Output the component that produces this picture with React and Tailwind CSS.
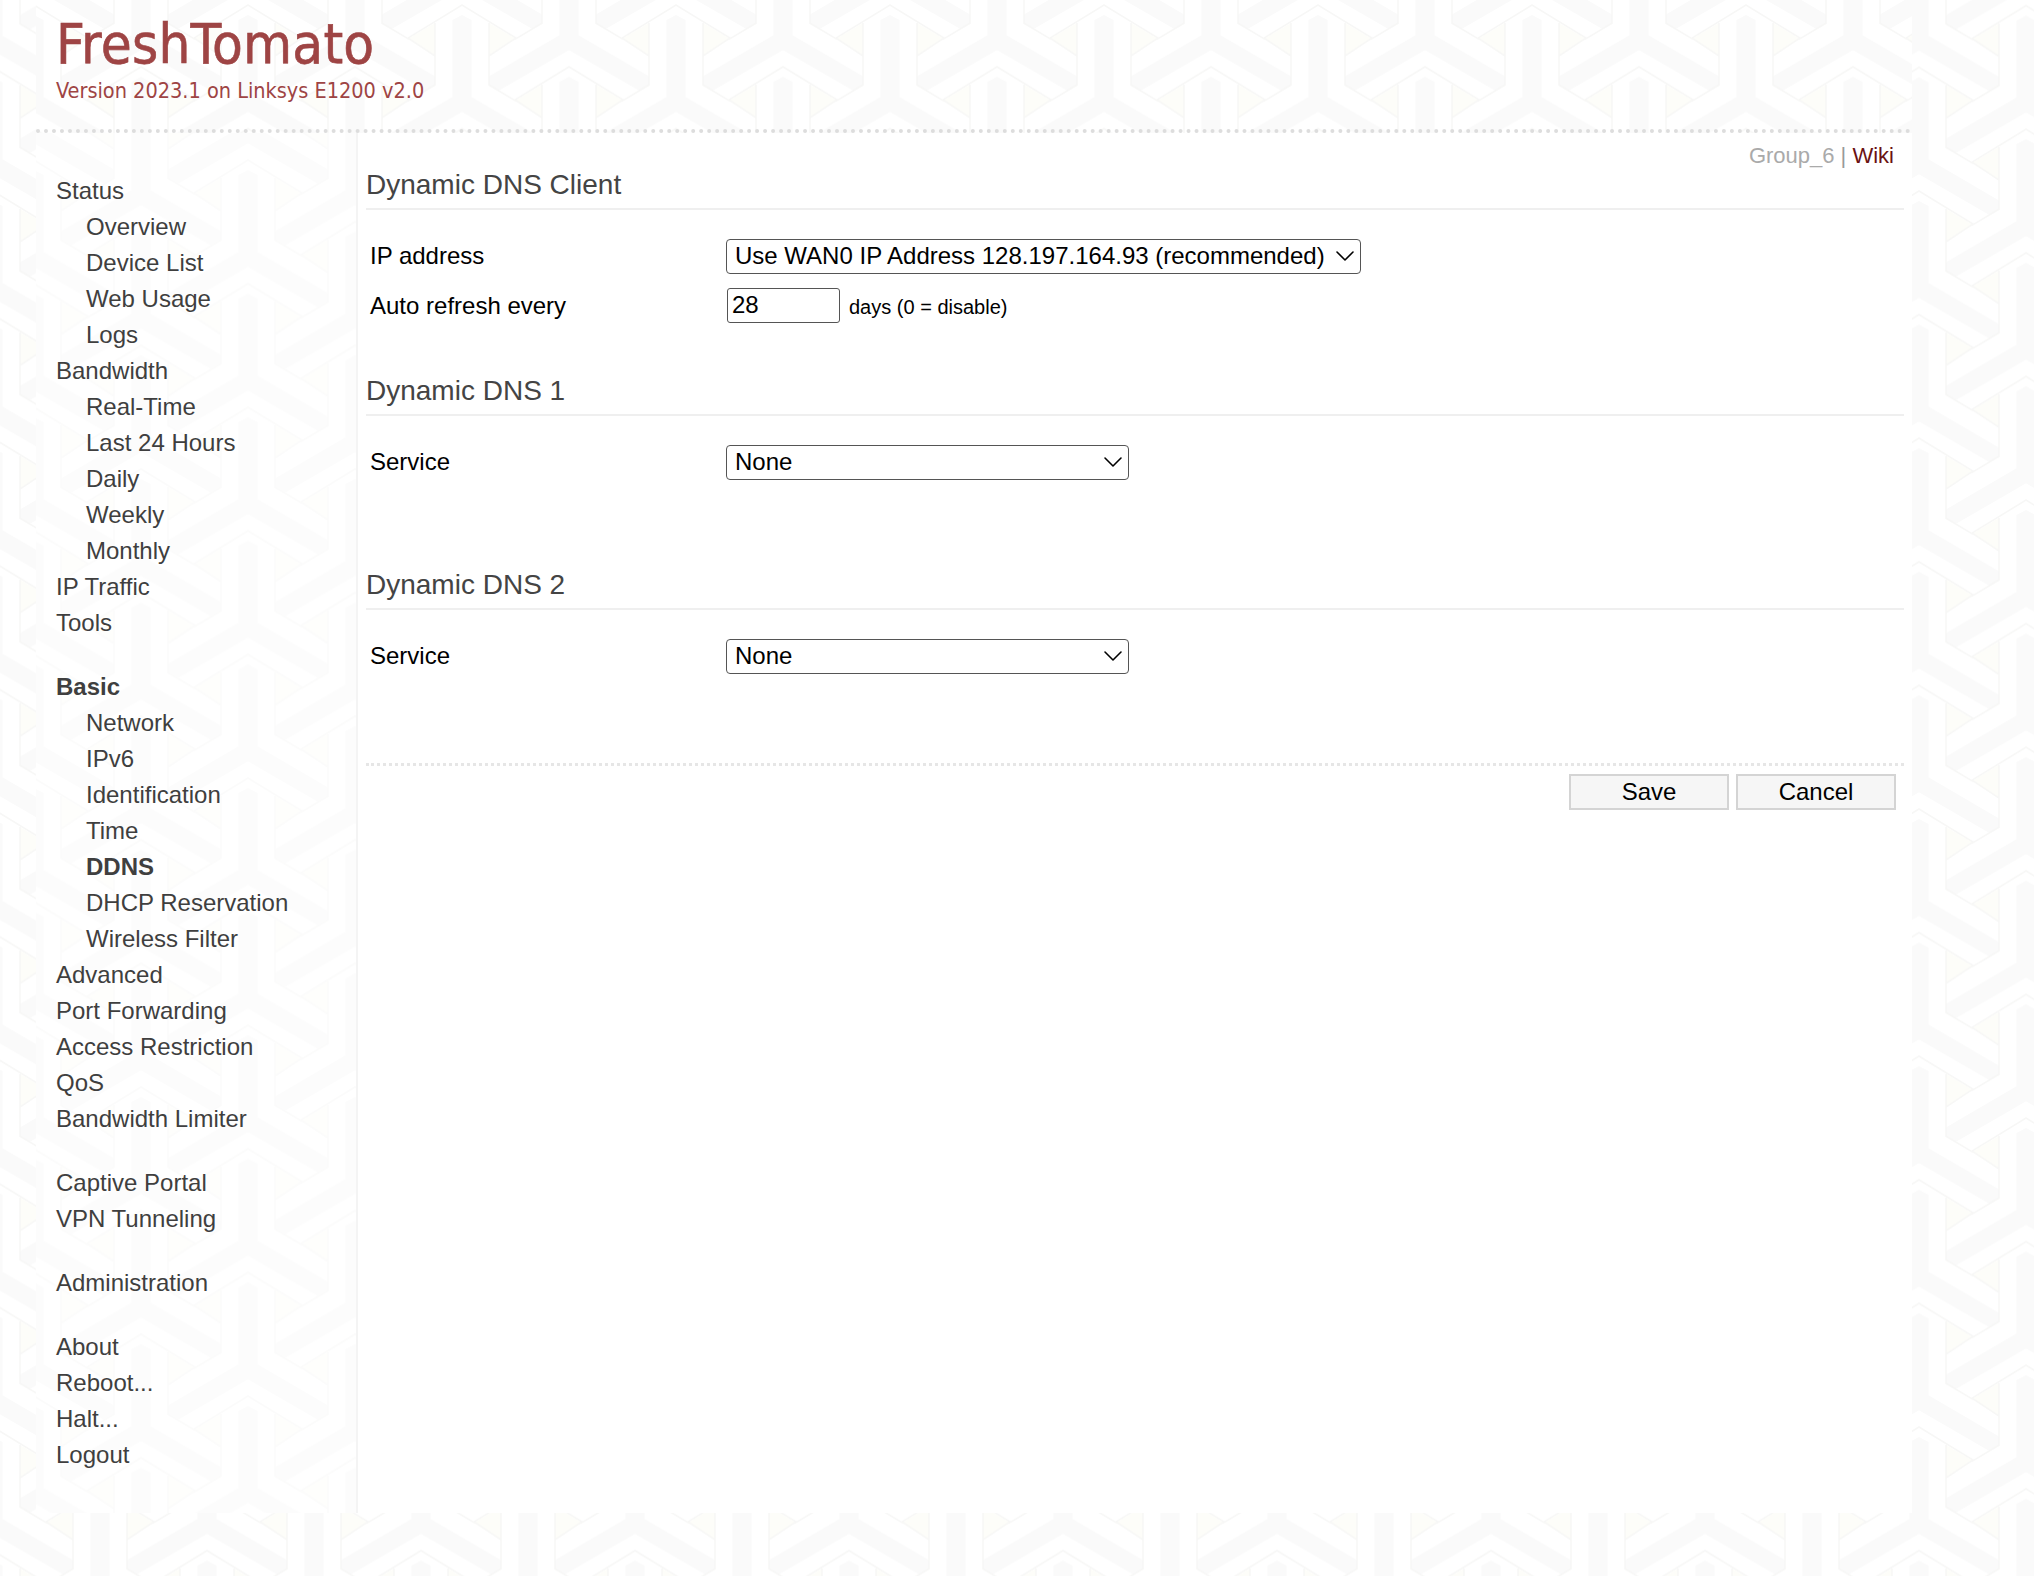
import { ChevronDown } from 'lucide-react'

const tileW = 214
const tileH = 123.6

// lattice copies of the motif that can touch one tile
const copies = []
for (let j = -3; j <= 2; j++) {
  for (let i = -1; i <= 3; i++) {
    if ((i + j) % 2 === 0) copies.push([i * 107, j * 61.8])
  }
}

function Motif({ x, y }) {
  return (
    <g transform={`translate(${x} ${y})`}>
      <polygon
        fill="#fafafa"
        points="0,10 9.5,15 9.5,92 80,133 80,142 70.4,147.6 0,107 -70.4,147.6 -80,142 -80,133 -9.5,92 -9.5,15"
      />
      <polygon fill="#fdfdf9" points="27,18 27,51 54,34" />
      <polygon fill="#fdfdf9" points="-27,18 -27,51 -54,34" />
      <path
        fill="none"
        stroke="#f7f7f6"
        strokeWidth="1.5"
        d="M-54 33 L0 0 L54 33 L27 51 M-54 33 L-27 51 M27 18 V80 L54 96 M-27 18 V80 L-54 96"
      />
    </g>
  )
}

function HexBackground({ id, x, y, className }) {
  return (
    <svg className={`absolute inset-0 h-full w-full ${className || ''}`} aria-hidden="true">
      <defs>
        <pattern id={id} x={x} y={y} width={tileW} height={tileH} patternUnits="userSpaceOnUse">
          {copies.map(([cx, cy]) => (
            <Motif key={`${cx}_${cy}`} x={cx} y={cy} />
          ))}
        </pattern>
      </defs>
      <rect width="100%" height="100%" fill={`url(#${id})`} />
    </svg>
  )
}

const navGroups = [
  [
    { label: 'Status' },
    { label: 'Overview', sub: true },
    { label: 'Device List', sub: true },
    { label: 'Web Usage', sub: true },
    { label: 'Logs', sub: true },
    { label: 'Bandwidth' },
    { label: 'Real-Time', sub: true },
    { label: 'Last 24 Hours', sub: true },
    { label: 'Daily', sub: true },
    { label: 'Weekly', sub: true },
    { label: 'Monthly', sub: true },
    { label: 'IP Traffic' },
    { label: 'Tools' },
  ],
  [
    { label: 'Basic', bold: true },
    { label: 'Network', sub: true },
    { label: 'IPv6', sub: true },
    { label: 'Identification', sub: true },
    { label: 'Time', sub: true },
    { label: 'DDNS', sub: true, bold: true },
    { label: 'DHCP Reservation', sub: true },
    { label: 'Wireless Filter', sub: true },
    { label: 'Advanced' },
    { label: 'Port Forwarding' },
    { label: 'Access Restriction' },
    { label: 'QoS' },
    { label: 'Bandwidth Limiter' },
  ],
  [{ label: 'Captive Portal' }, { label: 'VPN Tunneling' }],
  [{ label: 'Administration' }],
  [{ label: 'About' }, { label: 'Reboot...' }, { label: 'Halt...' }, { label: 'Logout' }],
]

function Sidebar() {
  return (
    <nav className="relative w-[320px] shrink-0 overflow-hidden bg-white">
      <HexBackground id="hex-side" x={212} y={27} className="opacity-40" />
      <div className="relative flex flex-col gap-[28px] pl-5 pt-10">
        {navGroups.map((group, i) => (
          <ul key={i}>
            {group.map((item) => (
              <li
                key={item.label}
                className={`h-9 leading-9 text-[24px] text-[#3f3f3f] ${item.sub ? 'pl-[30px]' : ''} ${
                  item.bold ? 'font-bold' : ''
                }`}
              >
                {item.label}
              </li>
            ))}
          </ul>
        ))}
      </div>
    </nav>
  )
}

function SectionTitle({ children }) {
  return (
    <h2 className="h-[41px] border-b-2 border-[#efefef] text-[28px] leading-[32px] font-normal text-[#444]">
      {children}
    </h2>
  )
}

function Select({ value, width }) {
  return (
    <div className={`relative h-[35px] ${width}`}>
      <select className="h-full w-full appearance-none rounded-[4px] border border-[#555] bg-white pb-0.5 pl-2 text-[24px] leading-[31px] text-black">
        <option>{value}</option>
      </select>
      <ChevronDown
        size={32}
        strokeWidth={1.2}
        className="pointer-events-none absolute right-0 top-[2px] text-black"
      />
    </div>
  )
}

function FormRow({ label, children }) {
  return (
    <div className="flex h-[35px] items-center pl-1 text-[24px] leading-[35px] text-black">
      <div className="w-[356px] shrink-0">{label}</div>
      {children}
    </div>
  )
}

export default function App() {
  return (
    <div
      className="relative h-[1576px] w-full overflow-hidden bg-white font-['Liberation_Sans',Arial,sans-serif]"
    >
      <HexBackground id="hex-body" x={100} y={5.6} />

      <div className="relative ml-9 flex h-[1513px] w-[1876px] flex-col bg-white">
        <HexBackground id="hex-wrap" x={212} y={5} />

        <header className="relative h-[129px] pl-5 pt-[14px] text-[#9e4444]">
          <h1 className="h-[63px] font-['DejaVu_Sans_Condensed','DejaVu_Sans',sans-serif] text-[56px] leading-[60px] font-normal tracking-[0.2px] [-webkit-text-stroke:0.6px_#9e4444]">
            FreshTomato
          </h1>
          <p className="font-['DejaVu_Sans_Condensed','DejaVu_Sans',sans-serif] text-[21.5px] leading-[28px]">
            Version 2023.1 on Linksys E1200 v2.0
          </p>
        </header>
        <div className="relative h-1 border-t-4 border-dotted border-[#dddddd]" />

        <div className="relative flex flex-1">
          <Sidebar />

          <main className="flex-1 border-l-2 border-[#f4f4f4] bg-white px-2">
            <div className="mt-2.5 h-[26px] pr-[10px] text-right text-[22px] leading-[26px] text-[#aaaaaa]">
              Group_6 <span className="text-[#999]">|</span> <span className="text-[#6b1212]">Wiki</span>
            </div>

            <SectionTitle>Dynamic DNS Client</SectionTitle>
            <div className="mt-7 flex flex-col gap-[15px]">
              <FormRow label="IP address">
                <Select value="Use WAN0 IP Address 128.197.164.93 (recommended)" width="w-[635px]" />
              </FormRow>
              <FormRow label="Auto refresh every">
                <input
                  defaultValue="28"
                  className="ml-px h-[35px] w-[113px] rounded-[3px] border border-[#555] bg-white pb-0.5 pl-1 text-[24px] text-black"
                />
                <span className="ml-[9px] pt-1 text-[20px]">days (0 = disable)</span>
              </FormRow>
            </div>

            <div className="mt-[52px]">
              <SectionTitle>Dynamic DNS 1</SectionTitle>
            </div>
            <div className="mt-7">
              <FormRow label="Service">
                <Select value="None" width="w-[403px]" />
              </FormRow>
            </div>

            <div className="mt-[90px]">
              <SectionTitle>Dynamic DNS 2</SectionTitle>
            </div>
            <div className="mt-7">
              <FormRow label="Service">
                <Select value="None" width="w-[403px]" />
              </FormRow>
            </div>

            <div className="mt-[90px] border-t-[3px] border-dotted border-[#e6e6e6]" />
            <div className="mt-2 flex justify-end gap-[7px] pr-2">
              <button className="h-[36px] w-[160px] border-2 border-[#d4d4d4] bg-[#f6f6f6] text-[24px] leading-6 text-black">
                Save
              </button>
              <button className="h-[36px] w-[160px] border-2 border-[#d4d4d4] bg-[#f6f6f6] text-[24px] leading-6 text-black">
                Cancel
              </button>
            </div>
          </main>
        </div>
      </div>
    </div>
  )
}
